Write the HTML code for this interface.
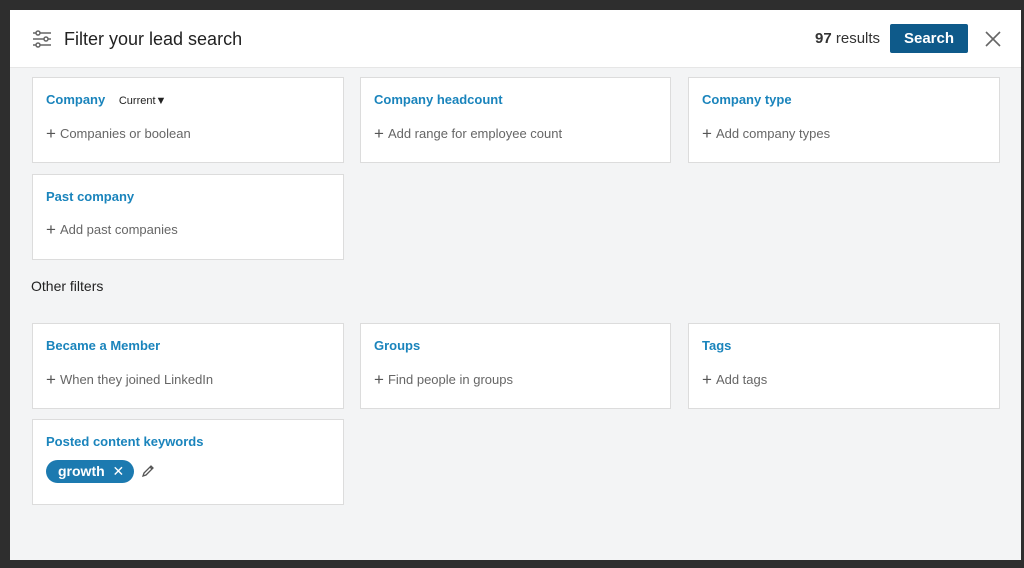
<!DOCTYPE html>
<html><head><style>
body{margin:0;width:1024px;height:568px;background:#2e2e2e;font-family:"Liberation Sans",sans-serif;overflow:hidden;position:relative}
.modal{position:absolute;left:10px;top:10px;width:1011px;height:550px;background:#f3f4f5}
.hdr{position:absolute;left:0;top:0;width:100%;height:57px;background:#fff;border-bottom:1px solid #e6e6e6}
.title{position:absolute;left:54px;top:19px;font-size:18px;color:#222}
.res{position:absolute;left:805px;top:20px;font-size:15px;color:#333}
.btn{position:absolute;left:880px;top:14px;width:78px;height:29px;background:#0e5a8a;color:#fff;font-weight:bold;font-size:15px;text-align:center;line-height:29px;border-radius:2px}
.card{position:absolute;background:#fff;border:1px solid #dcdcdc;box-sizing:border-box}
.card .h{position:absolute;left:13px;top:14px;font-size:13px;font-weight:bold;color:#1a84bc}
.card .a{position:absolute;left:13px;top:45px;font-size:13px;color:#666}
.card .a b{font-weight:normal;font-size:17px;color:#555;margin-right:4px;position:relative;top:1px}
.other{position:absolute;left:21px;top:268px;font-size:14px;color:#222}
</style></head><body>
<div class="modal">
<div class="hdr">
<svg style="position:absolute;left:22px;top:20px" width="20" height="18" viewBox="0 0 20 18" fill="none" stroke="#666" stroke-width="1.5"><line x1="1" y1="3" x2="19" y2="3"/><line x1="1" y1="9" x2="19" y2="9"/><line x1="1" y1="15" x2="19" y2="15"/><circle cx="6" cy="3" r="2" fill="#fff"/><circle cx="14" cy="9" r="2" fill="#fff"/><circle cx="6" cy="15" r="2" fill="#fff"/></svg>
<div class="title">Filter your lead search</div>
<div class="res"><b>97</b> results</div>
<div class="btn">Search</div>
<svg style="position:absolute;left:975px;top:21px" width="16" height="16" viewBox="0 0 16 16" stroke="#666" stroke-width="1.6"><line x1="1" y1="1" x2="15" y2="15"/><line x1="15" y1="1" x2="1" y2="15"/></svg>
</div>
</div>
<div class="card" style="left:32px;top:77px;width:312px;height:86px"><div class="h">Company <span style="font-weight:normal;color:#222;font-size:11px;margin-left:10px">Current&#9660;</span></div><div class="a"><b>+</b>Companies or boolean</div></div>
<div class="card" style="left:360px;top:77px;width:311px;height:86px"><div class="h">Company headcount</div><div class="a"><b>+</b>Add range for employee count</div></div>
<div class="card" style="left:688px;top:77px;width:312px;height:86px"><div class="h">Company type</div><div class="a"><b>+</b>Add company types</div></div>
<div class="card" style="left:32px;top:174px;width:312px;height:86px"><div class="h">Past company</div><div class="a" style="top:44px"><b>+</b>Add past companies</div></div>
<div class="other" style="left:31px;top:278px">Other filters</div>
<div class="card" style="left:32px;top:323px;width:312px;height:86px"><div class="h">Became a Member</div><div class="a"><b>+</b>When they joined LinkedIn</div></div>
<div class="card" style="left:360px;top:323px;width:311px;height:86px"><div class="h">Groups</div><div class="a"><b>+</b>Find people in groups</div></div>
<div class="card" style="left:688px;top:323px;width:312px;height:86px"><div class="h">Tags</div><div class="a"><b>+</b>Add tags</div></div>
<div class="card" style="left:32px;top:419px;width:312px;height:86px"><div class="h">Posted content keywords</div>
<div style="position:absolute;left:13px;top:40px;width:88px;height:23px;border-radius:12px;background:#1c7ab0;color:#fff;font-weight:bold;font-size:14px;line-height:23px;padding-left:12px;box-sizing:border-box">growth <span style="font-weight:normal;margin-left:4px">&#x2715;</span></div>
<svg style="position:absolute;left:108px;top:44px" width="14" height="14" viewBox="0 0 14 14" fill="none" stroke="#555" stroke-width="1.3"><path d="M2 12 L3 9 L10 2 L12 4 L5 11 Z M9 3 L11 5"/></svg>
</div>
</body></html>
